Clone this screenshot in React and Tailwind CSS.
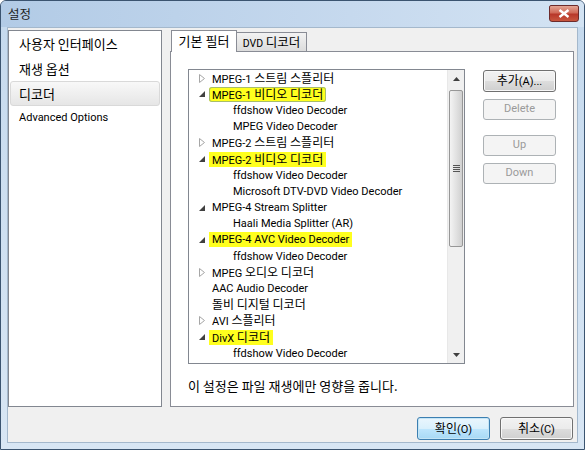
import React from 'react';

const FONT = { fontFamily: 'Roboto, "Noto Sans CJK KR", sans-serif' };
const KFONT = { fontFamily: '"Noto Sans CJK KR", sans-serif' };
const HANGUL = /([\u3131-\uD7A3]+(?:\s+[\u3131-\uD7A3]+)*)/;

// Latin runs use the base size, Hangul runs get their own (bigger) size
function T({ s, k }) {
  return (
    <span>
      {s.split(HANGUL).map((part, i) =>
        i % 2 === 1 ? (
          <span key={i} className={k} style={KFONT}>
            {part}
          </span>
        ) : (
          <React.Fragment key={i}>{part}</React.Fragment>
        )
      )}
    </span>
  );
}

const rows = [
  { t: 'MPEG-1 스트림 스플리터', arrow: 'closed' },
  { t: 'MPEG-1 비디오 디코더', arrow: 'open', hl: true, sel: true },
  { t: 'ffdshow Video Decoder', child: true },
  { t: 'MPEG Video Decoder', child: true },
  { t: 'MPEG-2 스트림 스플리터', arrow: 'closed' },
  { t: 'MPEG-2 비디오 디코더', arrow: 'open', hl: true },
  { t: 'ffdshow Video Decoder', child: true },
  { t: 'Microsoft DTV-DVD Video Decoder', child: true },
  { t: 'MPEG-4 Stream Splitter', arrow: 'open' },
  { t: 'Haali Media Splitter (AR)', child: true },
  { t: 'MPEG-4 AVC Video Decoder', arrow: 'open', hl: true },
  { t: 'ffdshow Video Decoder', child: true },
  { t: 'MPEG 오디오 디코더', arrow: 'closed' },
  { t: 'AAC Audio Decoder' },
  { t: '돌비 디지털 디코더' },
  { t: 'AVI 스플리터', arrow: 'closed' },
  { t: 'DivX 디코더', arrow: 'open', hl: true },
  { t: 'ffdshow Video Decoder', child: true },
  { t: '디코더', child: true },
];

function Arrow({ type }) {
  if (type === 'closed') {
    return (
      <svg width="6" height="9" viewBox="0 0 6 9">
        <path d="M0.5 0.5 L5.5 4.5 L0.5 8.5 Z" fill="white" stroke="#a6a6a6" />
      </svg>
    );
  }
  return (
    <svg width="6" height="6" viewBox="0 0 6 6">
      <path d="M6 0 L6 6 L0 6 Z" fill="#404040" />
    </svg>
  );
}

function TreeRow({ row }) {
  return (
    <div className={`flex h-[16.2px] items-center ${row.child ? 'pl-[41px]' : 'pl-[10px]'}`}>
      {!row.child && (
        <div className="flex w-[10px] items-center">{row.arrow && <Arrow type={row.arrow} />}</div>
      )}
      <span
        className={`flex h-[15px] items-center whitespace-nowrap px-[3px] ${
          row.hl ? 'bg-[#ffff1e]' : ''
        } ${row.sel ? 'rounded-[3px] shadow-[inset_0_0_0_1px_#a7bd6b]' : ''}`}
      >
        <span className="leading-[15px]">
          <T s={row.t} k="text-[12px]" />
        </span>
      </span>
    </div>
  );
}

function Button({ children, disabled, primary, className = '' }) {
  if (disabled) {
    return (
      <div
        className={`flex items-center justify-center rounded-[3px] border border-[#adb2b5] bg-[#f4f4f4] text-[#9a9a9a] ${className}`}
      >
        {children}
      </div>
    );
  }
  return (
    <div
      className={`flex items-center justify-center rounded-[3px] border ${
        primary
          ? 'border-[#3c7fb1] bg-[linear-gradient(to_bottom,#eaf6fd_0%,#d9f0fc_50%,#bee6fd_51%,#a7d9f5_100%)] shadow-[inset_0_0_0_1px_#c4e5f6]'
          : 'border-[#707070] bg-[linear-gradient(to_bottom,#f2f2f2_0%,#ebebeb_50%,#dddddd_51%,#cfcfcf_100%)] shadow-[inset_0_0_0_1px_#f8f8f8]'
      } text-black ${className}`}
    >
      {children}
    </div>
  );
}

function Scrollbar() {
  return (
    <div className="flex w-[17px] flex-col border-l border-[#e8e8e8] bg-[#f0f0f0]">
      <div className="flex h-[17px] items-center justify-center">
        <svg width="7" height="4" viewBox="0 0 7 4">
          <path d="M3.5 0 L7 4 L0 4 Z" fill="#404040" />
        </svg>
      </div>
      <div className="mx-[1px] mt-[3px] flex h-[157px] items-center justify-center rounded-[2px] border border-[#979797] bg-[linear-gradient(to_right,#f3f3f3,#e2e2e2_50%,#d0d0d0)]">
        <div className="flex flex-col gap-[1px]">
          <div className="h-[1px] w-[7px] bg-[#555]" />
          <div className="h-[1px] w-[7px] bg-[#555]" />
          <div className="h-[1px] w-[7px] bg-[#555]" />
          <div className="h-[1px] w-[7px] bg-[#555]" />
        </div>
      </div>
      <div className="flex-1" />
      <div className="flex h-[17px] items-center justify-center">
        <svg width="7" height="4" viewBox="0 0 7 4">
          <path d="M0 0 L7 0 L3.5 4 Z" fill="#404040" />
        </svg>
      </div>
    </div>
  );
}

export default function App() {
  return (
    <div
      className="flex h-[450px] w-[585px] flex-col overflow-hidden rounded-t-[6px] border border-[#3b5470] bg-[#c9dcef] text-[11px] text-black"
      style={FONT}
    >
      {/* title bar */}
      <div className="flex h-[26px] shrink-0 items-start justify-between bg-[linear-gradient(to_right,#b2cbe6,#c6d9ee_60%,#d3e3f3)] pl-[7px] pr-[5px]">
        <span className="pt-[4px] text-[12.5px] text-[#1e1e1e]" style={KFONT}>설정</span>
        <div className="mt-[4px] flex h-[17px] w-[30px] items-center justify-center rounded-b-[3px] rounded-t-[2px] border border-[#6d2b2b] bg-[linear-gradient(to_bottom,#e4a594,#d06a58_45%,#b8382a_55%,#c8563e)]">
          <svg width="12" height="9" viewBox="0 0 12 9">
            <path d="M1.5 1 L10.5 8 M10.5 1 L1.5 8" stroke="white" strokeWidth="2.4" />
          </svg>
        </div>
      </div>

      {/* frame */}
      <div className="flex flex-1 flex-col bg-[linear-gradient(to_bottom,#c6daee,#d8e6f4)] px-[6px] pb-[6px]">
        <div className="flex flex-1 flex-col border border-[#a4b8cc] bg-[#f0f0f0] pr-[3px] pt-[2px]">
          <div className="flex h-[377px] gap-[8px]">
            {/* left list */}
            <div className="flex w-[156px] flex-col border border-[#828790] bg-white px-[1px]">
              <div className="flex h-[25px] items-center pl-[9px] text-[13px]" style={KFONT}>사용자 인터페이스</div>
              <div className="flex h-[25px] items-center pl-[9px] text-[13px]" style={KFONT}>재생 옵션</div>
              <div
                className="flex h-[25px] items-center rounded-[3px] border border-[#d9d9d9] bg-[linear-gradient(to_bottom,#f8f8f8,#e6e6e6)] pl-[8px] text-[13px]"
                style={KFONT}
              >
                디코더
              </div>
              <div className="flex h-[25px] items-center pl-[9px] text-[11px]">Advanced Options</div>
            </div>

            {/* right tabs */}
            <div className="flex flex-1 flex-col">
              <div className="flex h-[21px] items-end pl-[1px]">
                <div
                  className="relative z-10 -mb-px flex h-[22px] w-[66px] items-center justify-center border border-b-0 border-[#898c95] bg-white pb-[2px] text-[13px]"
                  style={KFONT}
                >
                  기본 필터
                </div>
                <div className="flex h-[19px] w-[70px] items-center justify-center border border-b-0 border-l-0 border-[#898c95] bg-[linear-gradient(to_bottom,#f2f2f2,#dcdcdc)] text-[10.5px]">
                  <T s="DVD 디코더" k="text-[12.5px]" />
                </div>
              </div>
              <div className="flex flex-1 flex-col border border-[#898c95] bg-white px-[17px] pt-[17px]">
                <div className="flex gap-[18px]">
                  <div className="flex h-[295px] w-[277px] border border-[#828790] bg-white">
                    <div className="flex-1 overflow-hidden">
                      {rows.map((r, i) => (
                        <TreeRow key={i} row={r} />
                      ))}
                    </div>
                    <Scrollbar />
                  </div>
                  <div className="flex flex-col pt-[1px]">
                    <Button className="h-[22px] w-[73px]">
                      <T s="추가(A)..." k="text-[12px]" />
                    </Button>
                    <Button disabled className="mt-[7px] h-[21px] w-[73px]">Delete</Button>
                    <Button disabled className="mt-[15px] h-[21px] w-[73px]">Up</Button>
                    <Button disabled className="mt-[7px] h-[21px] w-[73px]">Down</Button>
                  </div>
                </div>
                <div className="mt-[12px] text-[13px]" style={KFONT}>이 설정은 파일 재생에만 영향을 줍니다.</div>
              </div>
            </div>
          </div>

          <div className="mt-[10px] flex justify-end gap-[10px] pr-[1px]">
            <Button primary className="h-[23px] w-[73px]">
              <T s="확인(O)" k="text-[12px]" />
            </Button>
            <Button className="h-[23px] w-[73px]">
              <T s="취소(C)" k="text-[12px]" />
            </Button>
          </div>
        </div>
      </div>
    </div>
  );
}
